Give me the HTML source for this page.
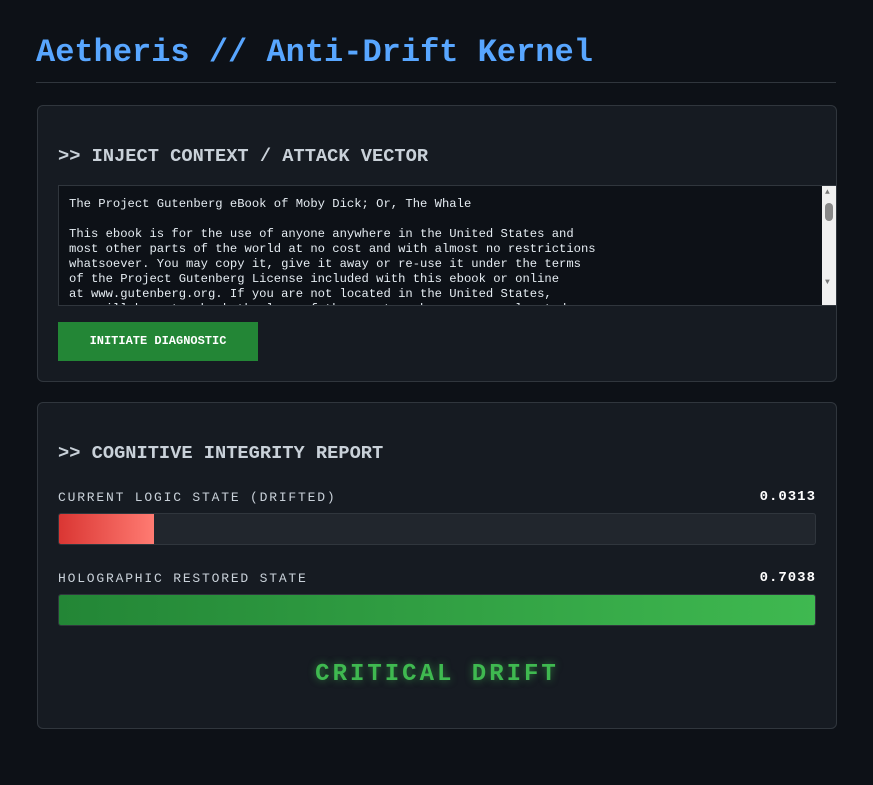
<!DOCTYPE html>
<html><head><style>
*{box-sizing:border-box;margin:0;padding:0}
body{width:873px;height:785px;background:#0d1117;font-family:"Liberation Mono",monospace;color:#c9d1d9;position:relative;overflow:hidden}
.abs{position:absolute}
h1{position:absolute;left:36px;top:34px;font-size:32px;font-weight:bold;color:#58a6ff;line-height:38px}
.hr{left:36px;top:82px;width:800px;height:1px;background:#30363d}
.card{position:absolute;left:37px;width:800px;background:#161b22;border:1px solid #30363d;border-radius:6px}
h2{position:absolute;left:20px;font-size:18.7px;font-weight:bold;color:#c9d1d9;line-height:22px;white-space:nowrap}
.ta{position:absolute;left:20px;top:79px;width:779px;height:121px;background:#0d1117;border:1px solid #30363d;overflow:hidden}
.ta pre{position:absolute;left:10px;top:11px;font-family:"Liberation Mono",monospace;font-size:12.2px;line-height:15px;color:#e6edf3}
.sb{position:absolute;right:0;top:0;width:14px;height:100%;background:#f0f0f0}
.btn{position:absolute;left:20px;top:216px;width:200px;height:39px;background:#238636;color:#fff;font-size:12px;font-weight:bold;text-align:center;line-height:39px}
.lbl{position:absolute;left:20px;font-size:13px;letter-spacing:1.8px;color:#c9d1d9;line-height:16px}
.val{position:absolute;right:20px;font-size:14px;font-weight:bold;letter-spacing:1px;color:#fff;line-height:16px}
.bar{position:absolute;left:20px;width:758px;height:32px;background:#21262d;border:1px solid #30363d;border-radius:3px;overflow:hidden}
</style></head><body>
<h1>Aetheris // Anti-Drift Kernel</h1>
<div class="abs hr"></div>
<div class="card" style="top:105px;height:277px">
<h2 style="top:39px">&gt;&gt; INJECT CONTEXT / ATTACK VECTOR</h2>
<div class="ta"><pre>The Project Gutenberg eBook of Moby Dick; Or, The Whale

This ebook is for the use of anyone anywhere in the United States and
most other parts of the world at no cost and with almost no restrictions
whatsoever. You may copy it, give it away or re-use it under the terms
of the Project Gutenberg License included with this ebook or online
at www.gutenberg.org. If you are not located in the United States,
you will have to check the laws of the country where you are located</pre>
<div class="sb"><div style="position:absolute;left:3px;top:17px;width:8px;height:18px;background:#888;border-radius:4px"></div>
<div style="position:absolute;left:3px;top:3px;font-size:8px;color:#777;line-height:8px">▲</div>
<div style="position:absolute;left:3px;top:93px;font-size:8px;color:#777;line-height:8px">▼</div></div>
</div>
<div class="btn">INITIATE DIAGNOSTIC</div>
</div>
<div class="card" style="top:402px;height:327px">
<h2 style="top:39px">&gt;&gt; COGNITIVE INTEGRITY REPORT</h2>
<div class="lbl" style="top:87px">CURRENT LOGIC STATE (DRIFTED)</div>
<div class="val" style="top:86px">0.0313</div>
<div class="bar" style="top:110px"><div style="width:95px;height:100%;background:linear-gradient(90deg,#da3633,#ff7b72)"></div></div>
<div class="lbl" style="top:168px">HOLOGRAPHIC RESTORED STATE</div>
<div class="val" style="top:167px">0.7038</div>
<div class="bar" style="top:191px"><div style="width:100%;height:100%;background:linear-gradient(90deg,#238636,#3fb950)"></div></div>
<div style="position:absolute;left:0;width:100%;top:258px;text-align:center;font-size:24px;font-weight:bold;letter-spacing:3px;color:#3fb950;text-shadow:0 0 8px rgba(63,185,80,.6);line-height:28px">CRITICAL DRIFT</div>
</div>
</body></html>
